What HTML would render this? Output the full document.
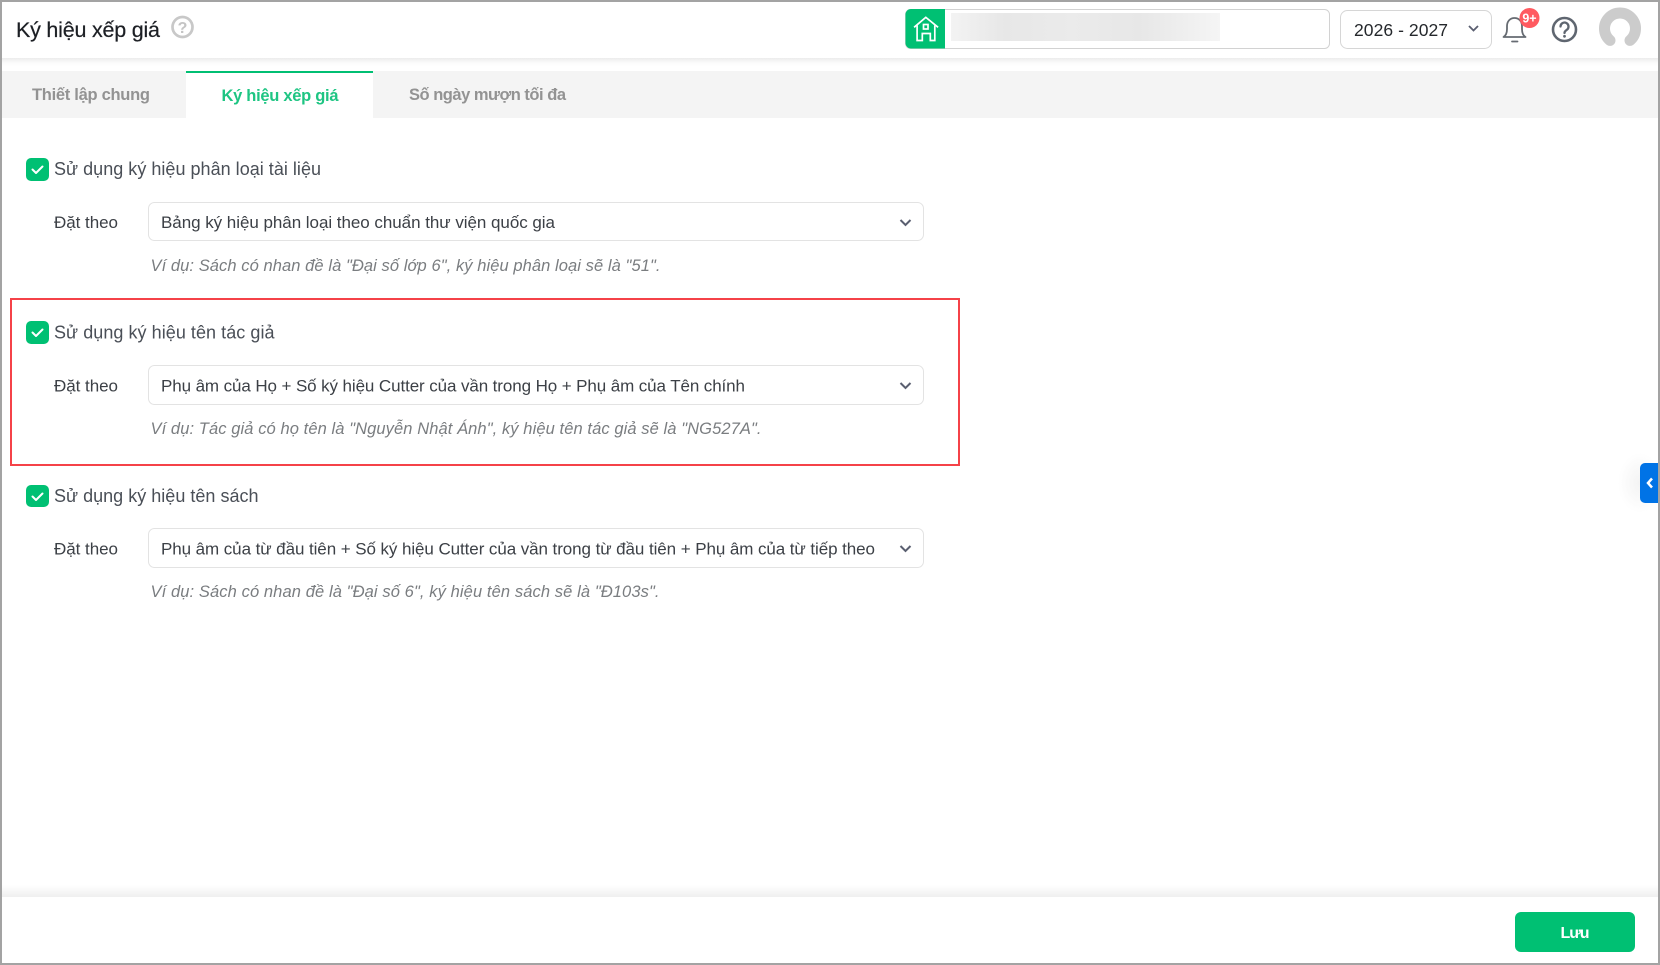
<!DOCTYPE html>
<html lang="vi">
<head>
<meta charset="utf-8">
<title>Ký hiệu xếp giá</title>
<style>
html,body{margin:0;padding:0;background:#fff;}
body{width:1660px;height:965px;overflow:hidden;position:relative;}
svg{position:absolute;left:0;top:0;display:block;}
text{font-family:"Liberation Sans",Arial,sans-serif;}
.lb{font-size:18px;fill:#4a4f57;}
.se{font-size:17px;fill:#3c4046;}
.hi{font-size:16.5px;font-style:italic;fill:#7a7d80;}
.tb{font-size:16.5px;font-weight:bold;fill:#939393;}
</style>
</head>
<body>
<svg width="1660" height="965" viewBox="0 0 1660 965" xmlns="http://www.w3.org/2000/svg">
<defs>
<linearGradient id="hs" x1="0" y1="0" x2="0" y2="1"><stop offset="0" stop-color="#ececec"/><stop offset="0.6" stop-color="#fbfbfb"/><stop offset="1" stop-color="#fff"/></linearGradient>
<linearGradient id="fs" x1="0" y1="0" x2="0" y2="1"><stop offset="0" stop-color="#fff"/><stop offset="1" stop-color="#efefef"/></linearGradient>
<linearGradient id="bl" x1="0" y1="0" x2="1" y2="0"><stop offset="0" stop-color="#f3f3f3"/><stop offset="0.2" stop-color="#e7e7e7"/><stop offset="0.45" stop-color="#ebebeb"/><stop offset="0.7" stop-color="#e7e7e7"/><stop offset="1" stop-color="#f5f5f5"/></linearGradient>
<radialGradient id="bs"><stop offset="0" stop-color="#e8e8e8"/><stop offset="1" stop-color="#fff"/></radialGradient>
</defs>
<rect width="1660" height="965" fill="#fff"/>

<!-- header shadow -->
<rect x="0" y="58" width="1660" height="8" fill="url(#hs)"/>

<!-- title -->
<text x="16" y="37" font-size="21.5" fill="#1c1f24" stroke="#1c1f24" stroke-width="0.2" textLength="144" lengthAdjust="spacing">Ký hiệu xếp giá</text>
<circle cx="182.5" cy="27" r="10" fill="none" stroke="#c8c8c8" stroke-width="2.700"/>
<text x="182.5" y="33" font-size="16" font-weight="bold" fill="#c4c4c4" text-anchor="middle">?</text>

<!-- school box -->
<rect x="905.5" y="9.5" width="424" height="39" rx="5" fill="#fff" stroke="#d2d2d2"/>
<path d="M911 9h34v39.500h-34a5.500 5.500 0 0 1-5.500-5.500v-28.500a5.500 5.500 0 0 1 5.500-5.500z" fill="#00c073"/>
<g transform="translate(905.500,9)" fill="none" stroke="#fff" stroke-width="1.700">
<path d="M8.600 18.300L20.300 8.300 32.600 18.300"/>
<path d="M11.600 16.500V31.500H16.800V24.500H24.800V31.500H29.300V16.500"/>
<rect x="18" y="15.500" width="4.500" height="4.500"/>
</g>
<rect x="951" y="13" width="269" height="28" fill="url(#bl)"/>

<!-- year select -->
<rect x="1340.500" y="10.500" width="151" height="38" rx="7" fill="#fff" stroke="#d6d6d6"/>
<text x="1354" y="36" font-size="17.500" fill="#25282c" textLength="94" lengthAdjust="spacing">2026 - 2027</text>
<path d="M1469 26l4.500 4.500 4.500-4.500" fill="none" stroke="#5a5f70" stroke-width="1.800"/>

<!-- bell -->
<g fill="none" stroke="#666b72" stroke-width="1.800" stroke-linecap="round" stroke-linejoin="round">
<path d="M1503.500 37c2.500-1.500 3.500-4 3.500-8v-3c0-4.500 3-8 7.500-8s7.500 3.500 7.500 8v3c0 4 1 6.500 3.500 8z"/>
<path d="M1512 41.500h5.500"/>
</g>
<circle cx="1529.500" cy="18" r="10" fill="#ff5a60"/>
<text x="1529.500" y="22.300" font-size="12.500" font-weight="bold" fill="#fff" text-anchor="middle">9+</text>

<!-- question -->
<circle cx="1564.500" cy="29.500" r="11.500" fill="none" stroke="#5f6670" stroke-width="2.600"/>
<path d="M1560.500 26.500a4 4 0 1 1 6.300 3.300c-1.500 1-2.300 1.700-2.300 3.200" fill="none" stroke="#5f6670" stroke-width="2.300" stroke-linecap="round"/>
<circle cx="1564.500" cy="36.300" r="1.400" fill="#5f6670"/>

<!-- avatar -->
<path d="M1610 40.400A15.500 15.500 0 1 1 1630 40.400" fill="none" stroke="#cccccc" stroke-width="11" stroke-linecap="round"/>

<!-- tabs -->
<rect x="2" y="71" width="1656" height="47" fill="#f4f4f4"/>
<rect x="186" y="71" width="187" height="47" fill="#fff"/>
<rect x="186" y="71" width="187" height="2" fill="#00bf73"/>
<text class="tb" x="32" y="100" textLength="118" lengthAdjust="spacing">Thiết lập chung</text>
<text class="tb" x="221.500" y="101" textLength="117" lengthAdjust="spacing" style="fill:#1ec583">Ký hiệu xếp giá</text>
<text class="tb" x="409" y="100" textLength="157" lengthAdjust="spacing">Số ngày mượn tối đa</text>

<!-- section 1 -->
<rect x="26" y="158" width="23" height="23" rx="5" fill="#00c073"/>
<path d="M32.500 169.500l3.500 3.500 6.500-6.500" fill="none" stroke="#fff" stroke-width="2" stroke-linecap="round" stroke-linejoin="round"/>
<text class="lb" x="54" y="175" textLength="267" lengthAdjust="spacing">Sử dụng ký hiệu phân loại tài liệu</text>
<text class="se" x="54" y="228" textLength="64" lengthAdjust="spacing">Đặt theo</text>
<rect x="148.500" y="202.500" width="775" height="38" rx="6" fill="#fff" stroke="#e3e3e3"/>
<text class="se" x="161" y="228" textLength="394" lengthAdjust="spacing">Bảng ký hiệu phân loại theo chuẩn thư viện quốc gia</text>
<path d="M900.500 220l5 5 5-5" fill="none" stroke="#5a5f70" stroke-width="2"/>
<text class="hi" x="150.500" y="271" textLength="510" lengthAdjust="spacing">Ví dụ: Sách có nhan đề là "Đại số lớp 6", ký hiệu phân loại sẽ là "51".</text>

<!-- red box -->
<rect x="11" y="299" width="948" height="166" fill="none" stroke="#f54248" stroke-width="2"/>

<!-- section 2 -->
<rect x="26" y="321" width="23" height="23" rx="5" fill="#00c073"/>
<path d="M32.500 332.500l3.500 3.500 6.500-6.500" fill="none" stroke="#fff" stroke-width="2" stroke-linecap="round" stroke-linejoin="round"/>
<text class="lb" x="54" y="338.500" textLength="220.500" lengthAdjust="spacing">Sử dụng ký hiệu tên tác giả</text>
<text class="se" x="54" y="391.500" textLength="64" lengthAdjust="spacing">Đặt theo</text>
<rect x="148.500" y="365.500" width="775" height="39" rx="6" fill="#fff" stroke="#e3e3e3"/>
<text class="se" x="161" y="391.500" textLength="584" lengthAdjust="spacing">Phụ âm của Họ + Số ký hiệu Cutter của vần trong Họ + Phụ âm của Tên chính</text>
<path d="M900.500 383l5 5 5-5" fill="none" stroke="#5a5f70" stroke-width="2"/>
<text class="hi" x="150.500" y="434" textLength="611" lengthAdjust="spacing">Ví dụ: Tác giả có họ tên là "Nguyễn Nhật Ánh", ký hiệu tên tác giả sẽ là "NG527A".</text>

<!-- section 3 -->
<rect x="26" y="485" width="23" height="22" rx="5" fill="#00c073"/>
<path d="M32.500 496.500l3.500 3.500 6.500-6.500" fill="none" stroke="#fff" stroke-width="2" stroke-linecap="round" stroke-linejoin="round"/>
<text class="lb" x="54" y="502" textLength="204.500" lengthAdjust="spacing">Sử dụng ký hiệu tên sách</text>
<text class="se" x="54" y="554.500" textLength="64" lengthAdjust="spacing">Đặt theo</text>
<rect x="148.500" y="528.500" width="775" height="39" rx="6" fill="#fff" stroke="#e3e3e3"/>
<text class="se" x="161" y="554.500" textLength="714" lengthAdjust="spacing">Phụ âm của từ đầu tiên + Số ký hiệu Cutter của vần trong từ đầu tiên + Phụ âm của từ tiếp theo</text>
<path d="M900.500 546l5 5 5-5" fill="none" stroke="#5a5f70" stroke-width="2"/>
<text class="hi" x="150.500" y="597" textLength="509" lengthAdjust="spacing">Ví dụ: Sách có nhan đề là "Đại số 6", ký hiệu tên sách sẽ là "Đ103s".</text>

<!-- blue side tab -->
<ellipse cx="1640" cy="483" rx="22" ry="30" fill="url(#bs)" opacity="0.5"/>
<path d="M1658 463h-13a5 5 0 0 0-5 5v30a5 5 0 0 0 5 5h13z" fill="#0073e6"/>
<path d="M1652 478.500l-4 4.500 4 4.500" fill="none" stroke="#fff" stroke-width="2.500"/>

<!-- footer -->
<rect x="0" y="885" width="1660" height="12" fill="url(#fs)"/>
<rect x="1515" y="912" width="120" height="40" rx="6" fill="#00c073"/>
<text x="1560.500" y="938" font-size="16" font-weight="bold" fill="#fff" textLength="29" lengthAdjust="spacing">Lưu</text>

<!-- window border -->
<rect x="1" y="1" width="1658" height="963" fill="none" stroke="#a3a3a3" stroke-width="2"/>
</svg>
</body>
</html>
